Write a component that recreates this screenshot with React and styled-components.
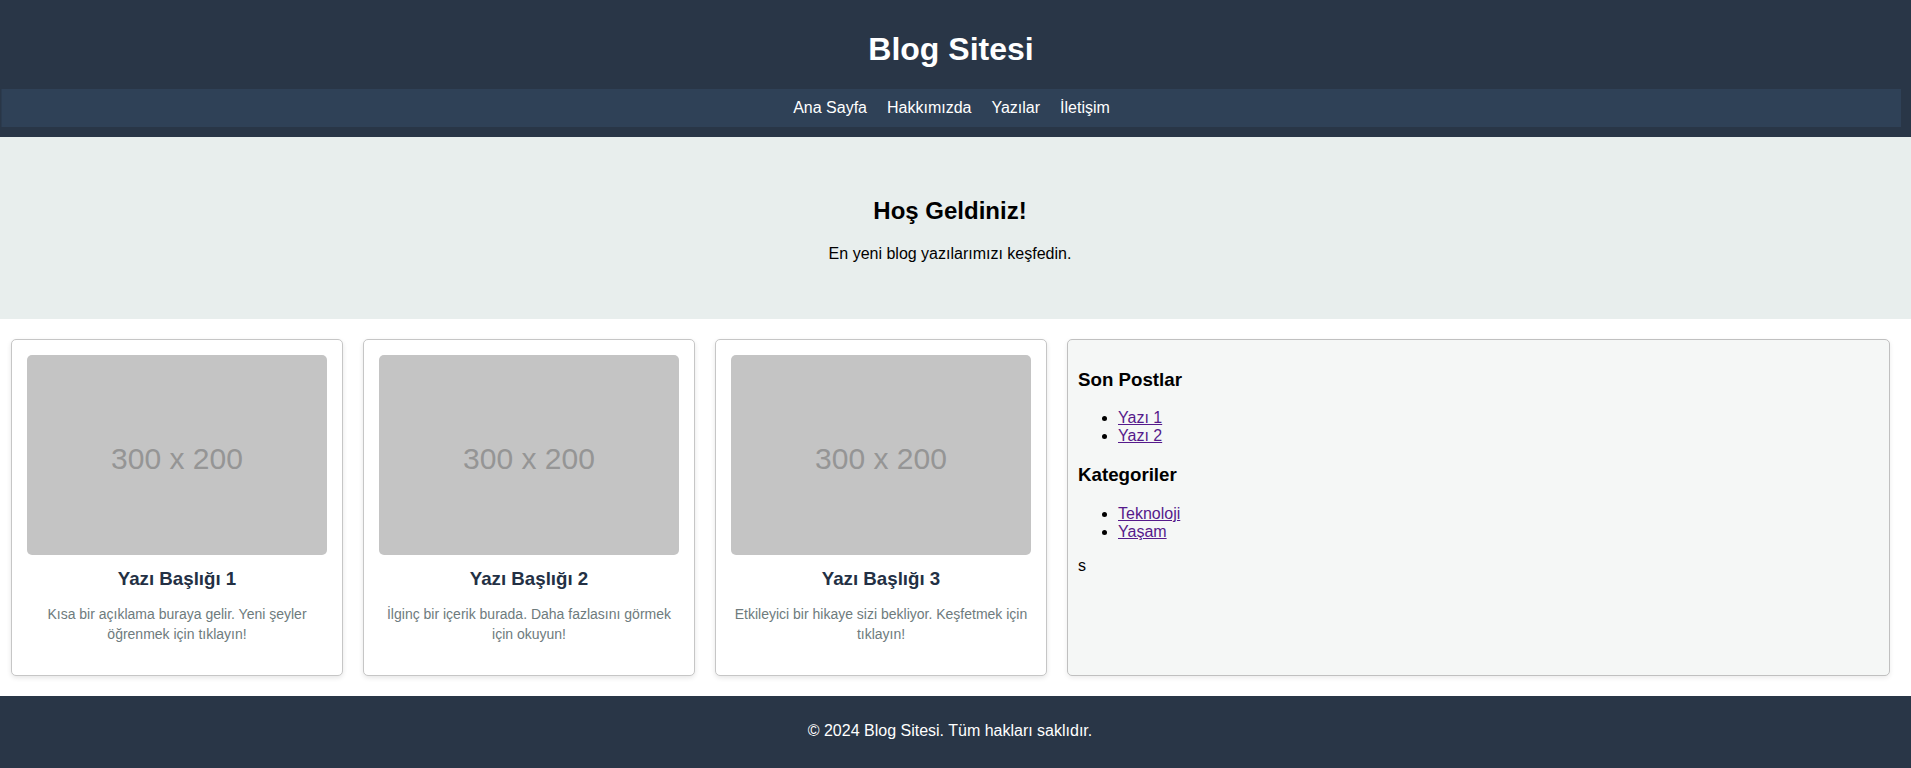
import React from 'react'
import styled, { createGlobalStyle } from 'styled-components'

const GlobalStyle = createGlobalStyle`
  body {
    margin: 0;
    font-family: "Liberation Sans", Arial, sans-serif;
    background: #fff;
    color: #000;
  }
`

const Header = styled.header`
  background: #293647;
  color: #fff;
  text-align: center;
  padding: 10px 10px 10px 1px;
`

const SiteTitle = styled.h1`
  font-size: 32px;
  margin: 21px 0;
`

const Nav = styled.nav`
  display: flex;
  justify-content: center;
  gap: 20px;
  padding: 10px;
  background: #2f4157;
  border: 1px solid #2b3b4f;
  border-width: 0 0 0 1px;
`

const NavLink = styled.a`
  color: #fff;
  text-decoration: none;
  font-size: 16px;
`

const Hero = styled.section`
  background: #e8eeed;
  text-align: center;
  padding: 40px 11px 40px 0;

  & h2 {
    font-size: 24px;
    margin: 20px 0;
  }

  & p {
    font-size: 16px;
    margin: 16px 0;
  }
`

const Main = styled.main`
  display: flex;
  align-items: stretch;
  gap: 20px;
  padding: 20px 21px 20px 11px;
`

const Card = styled.article`
  flex: 0 0 auto;
  width: 300px;
  padding: 15px;
  background: #fff;
  border: 1px solid #c6c6c6;
  border-radius: 5px;
  box-shadow: 0 2px 5px rgba(0, 0, 0, 0.1);
  text-align: center;
`

const Placeholder = styled.div`
  height: 200px;
  border-radius: 5px;
  background: #c4c4c4;
  color: #959595;
  font-size: 30px;
  display: flex;
  align-items: center;
  justify-content: center;
  padding-top: 8px;
  box-sizing: border-box;
`

const CardTitle = styled.h3`
  font-size: 18.72px;
  color: #233044;
  margin: 13px 0 11px;
`

const CardText = styled.p`
  font-size: 14px;
  line-height: 1.4;
  color: #6e7b7d;
  margin: 15px 0 16px;
`

const Sidebar = styled.aside`
  flex: 1;
  padding: 10px;
  background: #f5f7f6;
  border: 1px solid #c0c0c0;
  border-radius: 5px;
  box-shadow: 0 2px 5px rgba(0, 0, 0, 0.08);

  & h3 {
    font-size: 18.72px;
    margin: 18.72px 0;
  }

  & ul {
    margin: 16px 0;
    padding-left: 40px;
  }

  & a {
    color: #551a8b;
  }

  & p {
    margin: 16px 0;
  }
`

const Footer = styled.footer`
  background: #293647;
  color: #fff;
  text-align: center;
  font-size: 16px;
  padding: 26px 11px 28px 0;
`

const posts = [
  {
    title: 'Yazı Başlığı 1',
    text: 'Kısa bir açıklama buraya gelir. Yeni şeyler öğrenmek için tıklayın!',
  },
  {
    title: 'Yazı Başlığı 2',
    text: 'İlginç bir içerik burada. Daha fazlasını görmek için okuyun!',
  },
  {
    title: 'Yazı Başlığı 3',
    text: 'Etkileyici bir hikaye sizi bekliyor. Keşfetmek için tıklayın!',
  },
]

const App = () => {
  return (
    <>
      <GlobalStyle />
      <Header>
        <SiteTitle>Blog Sitesi</SiteTitle>
        <Nav>
          <NavLink href="#">Ana Sayfa</NavLink>
          <NavLink href="#">Hakkımızda</NavLink>
          <NavLink href="#">Yazılar</NavLink>
          <NavLink href="#">İletişim</NavLink>
        </Nav>
      </Header>
      <Hero>
        <h2>Hoş Geldiniz!</h2>
        <p>En yeni blog yazılarımızı keşfedin.</p>
      </Hero>
      <Main>
        {posts.map((post, index) => (
          <Card key={`post-${index}`}>
            <Placeholder>300 x 200</Placeholder>
            <CardTitle>{post.title}</CardTitle>
            <CardText>{post.text}</CardText>
          </Card>
        ))}
        <Sidebar>
          <h3>Son Postlar</h3>
          <ul>
            <li><a href="#">Yazı 1</a></li>
            <li><a href="#">Yazı 2</a></li>
          </ul>
          <h3>Kategoriler</h3>
          <ul>
            <li><a href="#">Teknoloji</a></li>
            <li><a href="#">Yaşam</a></li>
          </ul>
          <p>s</p>
        </Sidebar>
      </Main>
      <Footer>© 2024 Blog Sitesi. Tüm hakları saklıdır.</Footer>
    </>
  )
}

export default App
